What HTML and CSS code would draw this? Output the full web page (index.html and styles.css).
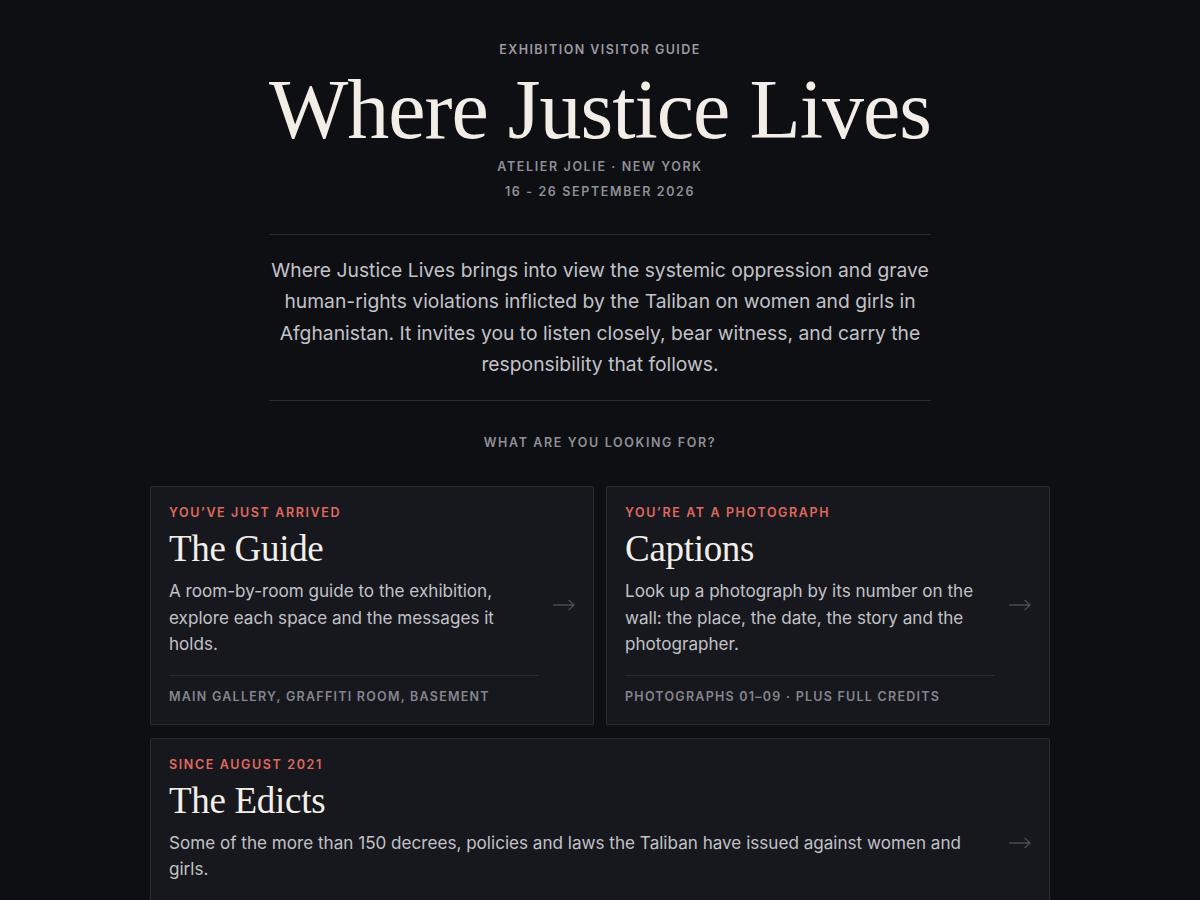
FILE: index.html
```html
<!DOCTYPE html>
<html lang="en">
<head>
<meta charset="utf-8">
<title>Where Justice Lives</title>
<link rel="stylesheet" href="styles.css">
</head>
<body>
<main class="page">
  <header class="hero">
    <p class="kicker">Exhibition Visitor Guide</p>
    <h1 class="title">Where Justice Lives</h1>
    <div class="meta">
      <p>Atelier Jolie · New York</p>
      <p>16 - 26 September 2026</p>
    </div>
    <p class="intro">Where Justice Lives brings into view the systemic oppression and grave human-rights violations inflicted by the Taliban on women and girls in Afghanistan. It invites you to listen closely, bear witness, and carry the responsibility that follows.</p>
  </header>

  <p class="prompt">What are you looking for?</p>

  <section class="cards">
    <a class="card" href="#guide">
      <div class="card-body">
        <p class="eyebrow">You’ve just arrived</p>
        <h2 class="card-title">The Guide</h2>
        <p class="card-text">A room-by-room guide to the exhibition, explore each space and the messages it holds.</p>
        <p class="card-foot">Main Gallery, Graffiti Room, Basement</p>
      </div>
      <svg class="arrow" viewBox="0 0 22 12" width="22" height="12" aria-hidden="true"><path d="M0 6H21M15.5 1L21 6L15.5 11" fill="none" stroke="currentColor" stroke-width="1.3"/></svg>
    </a>
    <a class="card" href="#captions">
      <div class="card-body">
        <p class="eyebrow">You’re at a photograph</p>
        <h2 class="card-title">Captions</h2>
        <p class="card-text">Look up a photograph by its number on the wall: the place, the date, the story and the photographer.</p>
        <p class="card-foot">Photographs 01–09 · Plus full credits</p>
      </div>
      <svg class="arrow" viewBox="0 0 22 12" width="22" height="12" aria-hidden="true"><path d="M0 6H21M15.5 1L21 6L15.5 11" fill="none" stroke="currentColor" stroke-width="1.3"/></svg>
    </a>
    <a class="card card-wide" href="#edicts">
      <div class="card-body">
        <p class="eyebrow">Since August 2021</p>
        <h2 class="card-title">The Edicts</h2>
        <p class="card-text">Some of the more than 150 decrees, policies and laws the Taliban have issued against women and girls.</p>
        <p class="card-foot">Education, Work, Movement, Dress, Public Life</p>
      </div>
      <svg class="arrow" viewBox="0 0 22 12" width="22" height="12" aria-hidden="true"><path d="M0 6H21M15.5 1L21 6L15.5 11" fill="none" stroke="currentColor" stroke-width="1.3"/></svg>
    </a>
  </section>
</main>
</body>
</html>
```
FILE: styles.css
```css
* { box-sizing: border-box; }
html, body { margin: 0; padding: 0; }
body {
  background: #0e0f13;
  color: #c4c4ca;
  font-family: Inter, "Liberation Sans", sans-serif;
}
p, h1, h2 { margin: 0; }

.page {
  width: 900px;
  margin: 0 auto;
  padding-top: 42px;
}

.hero {
  width: 662px;
  margin: 0 auto;
  text-align: center;
}
.kicker {
  font-size: 12.5px;
  line-height: 16px;
  font-weight: 600;
  letter-spacing: 0.117em;
  text-transform: uppercase;
  color: #9a9aa2;
}
.title {
  margin: 10px -40px 0;
  white-space: nowrap;
  font-family: "Liberation Serif", "DejaVu Serif", serif;
  font-weight: 400;
  font-size: 84px;
  line-height: 84px;
  letter-spacing: -1px;
  color: #f2eee7;
}
.meta {
  margin-top: 2px;
  font-size: 12.5px;
  line-height: 25px;
  font-weight: 600;
  letter-spacing: 0.13em;
  text-transform: uppercase;
  color: #8e8f97;
}
.intro {
  margin-top: 30px;
  padding: 20px 0 20px;
  border-top: 1px solid #2a2b31;
  border-bottom: 1px solid #2a2b31;
  font-size: 19.3px;
  line-height: 31.3px;
  color: #c2c2c8;
}

.prompt {
  margin-top: 34px;
  text-align: center;
  font-size: 12.5px;
  line-height: 16px;
  font-weight: 600;
  letter-spacing: 0.13em;
  text-transform: uppercase;
  color: #8e8f97;
}

.cards {
  margin-top: 35px;
  display: grid;
  grid-template-columns: 1fr 1fr;
  gap: 13px 12px;
}
.card {
  display: flex;
  align-items: center;
  gap: 14px;
  padding: 18px 18px 19px 18px;
  background: #17181d;
  border: 1px solid #2a2b31;
  border-radius: 2px;
  text-decoration: none;
  color: inherit;
}
.card-wide { grid-column: 1 / -1; }
.card-body { flex: 1; min-width: 0; }
.eyebrow {
  font-size: 12.5px;
  line-height: 16px;
  font-weight: 600;
  letter-spacing: 0.13em;
  text-transform: uppercase;
  color: #e0695f;
}
.card-title {
  margin-top: 6px;
  font-family: "Liberation Serif", "DejaVu Serif", serif;
  font-weight: 400;
  font-size: 37px;
  line-height: 44px;
  letter-spacing: -0.3px;
  color: #f3efe8;
}
.card-text {
  margin-top: 7px;
  padding-bottom: 17px;
  border-bottom: 1px solid #2a2b31;
  font-size: 17.1px;
  line-height: 26.5px;
  color: #c2c2c8;
}
.card-foot {
  margin-top: 13px;
  font-size: 12.5px;
  line-height: 16px;
  font-weight: 600;
  letter-spacing: 0.1em;
  text-transform: uppercase;
  color: #84858d;
}
.arrow {
  flex: none;
  color: #4a4b53;
}
```
